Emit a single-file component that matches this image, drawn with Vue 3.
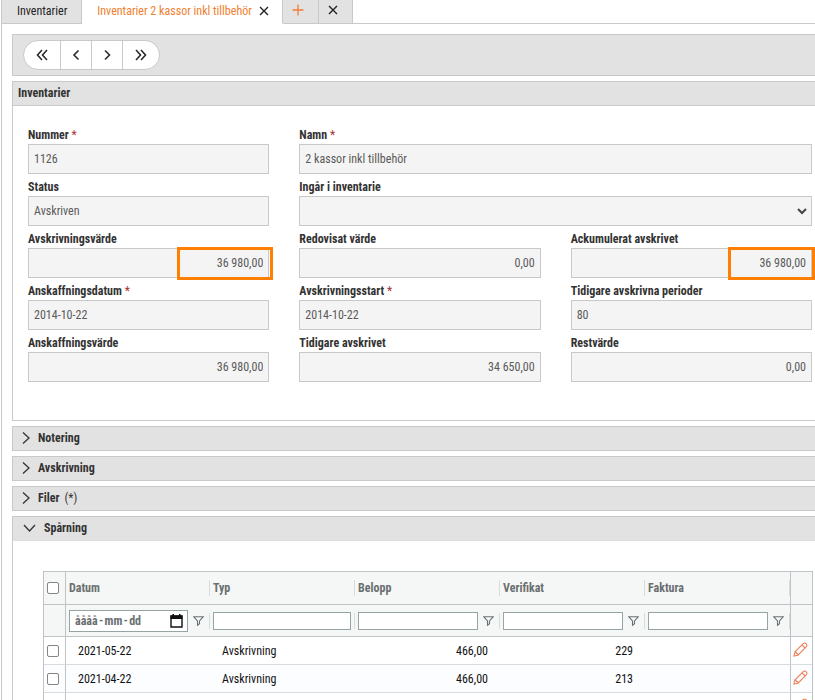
<script setup>
import { ref } from 'vue'

const fields = [
  { id: 'nummer', label: 'Nummer', required: true, value: '1126' },
  { id: 'namn', label: 'Namn', required: true, value: '2 kassor inkl tillbehör', wide: true },
  { id: 'status', label: 'Status', value: 'Avskriven' },
  { id: 'ingar', label: 'Ingår i inventarie', select: true, wide: true },
  { id: 'avskrivningsvarde', label: 'Avskrivningsvärde', value: '36 980,00', number: true, mark: 'mark' },
  { id: 'redovisat', label: 'Redovisat värde', value: '0,00', number: true },
  { id: 'ackumulerat', label: 'Ackumulerat avskrivet', value: '36 980,00', number: true, mark: 'mark mark-edge' },
  { id: 'anskaffningsdatum', label: 'Anskaffningsdatum', required: true, value: '2014-10-22' },
  { id: 'avskrivningsstart', label: 'Avskrivningsstart', required: true, value: '2014-10-22' },
  { id: 'perioder', label: 'Tidigare avskrivna perioder', value: '80' },
  { id: 'anskaffningsvarde', label: 'Anskaffningsvärde', value: '36 980,00', number: true },
  { id: 'tidigare', label: 'Tidigare avskrivet', value: '34 650,00', number: true },
  { id: 'restvarde', label: 'Restvärde', value: '0,00', number: true }
]

const closedPanels = [
  { title: 'Notering' },
  { title: 'Avskrivning' },
  { title: 'Filer', note: '(*)' }
]

const columns = [
  { name: 'Datum', date: true, funnel: true },
  { name: 'Typ' },
  { name: 'Belopp', funnel: true },
  { name: 'Verifikat', funnel: true },
  { name: 'Faktura', funnel: true }
]

const rows = ref([
  { id: 1, date: '2021-05-22', type: 'Avskrivning', amount: '466,00', voucher: '229' },
  { id: 2, date: '2021-04-22', type: 'Avskrivning', amount: '466,00', voucher: '213' },
  { id: 3, date: '', type: '', amount: '', voucher: '' }
])

const pager = [
  { label: 'Första', d: 'M7 2 2.5 7 7 12M12 2 7.5 7 12 12' },
  { label: 'Föregående', d: 'M9.5 2.5 5 7 9.5 11.5' },
  { label: 'Nästa', d: 'M5 2.5 9.5 7 5 11.5' },
  { label: 'Sista', d: 'M2 2 6.5 7 2 12M7 2 11.5 7 7 12' }
]
</script>

<template>
  <div class="page">
    <nav class="tabs">
      <button class="tab first">Inventarier</button>
      <div class="tab active">
        <button class="tab-title">Inventarier 2 kassor inkl tillbehör</button>
        <button class="plain" aria-label="Stäng flik">
          <svg width="10" height="10" viewBox="0 0 10 10"><path d="M1 1 9 9M9 1 1 9" stroke="#222" stroke-width="1.4" /></svg>
        </button>
      </div>
      <button class="tab small add" aria-label="Ny flik">
        <svg width="12" height="12" viewBox="0 0 12 12"><path d="M6 0.5V11.5M0.5 6H11.5" stroke="#f47c3c" stroke-width="1.3" /></svg>
      </button>
      <button class="tab small" aria-label="Stäng alla">
        <svg width="10" height="10" viewBox="0 0 10 10"><path d="M1 1 9 9M9 1 1 9" stroke="#222" stroke-width="1.4" /></svg>
      </button>
      <div class="tab-rest"></div>
    </nav>

    <main>
      <div class="toolbar">
        <div class="pager">
          <button v-for="p in pager" :key="p.label" :aria-label="p.label">
            <svg width="14" height="14" viewBox="0 0 14 14"><path :d="p.d" fill="none" stroke="#2b2b2b" stroke-width="1.6" /></svg>
          </button>
        </div>
      </div>

      <section class="panel">
        <h2 class="head">Inventarier</h2>
        <form class="fields" @submit.prevent>
          <div v-for="f in fields" :key="f.id" class="field" :class="{ wide: f.wide }">
            <label :for="f.id">{{ f.label }} <span v-if="f.required" class="req">*</span></label>
            <div class="box">
              <template v-if="f.select">
                <select :id="f.id"><option></option></select>
                <svg class="caret" width="10" height="7" viewBox="0 0 10 7"><path d="M1 1 5 5 9 1" fill="none" stroke="#444" stroke-width="2" /></svg>
              </template>
              <input v-else :id="f.id" type="text" :value="f.value" :class="{ number: f.number }" readonly />
              <span v-if="f.mark" :class="f.mark"></span>
            </div>
          </div>
        </form>
      </section>

      <button v-for="p in closedPanels" :key="p.title" class="head fold">
        <svg width="8" height="14" viewBox="0 0 8 14"><path d="M1 0.5 7 6 1 11.5" fill="none" stroke="#333" stroke-width="1.3" /></svg>
        <span>{{ p.title }}</span>
        <span v-if="p.note" class="note">{{ p.note }}</span>
      </button>

      <section class="panel">
        <button class="head fold open">
          <svg width="13" height="10" viewBox="0 0 13 10"><path d="M1 1 6.5 7 12 1" fill="none" stroke="#333" stroke-width="1.3" /></svg>
          <span>Spårning</span>
        </button>
        <div class="grid-wrap">
          <table>
            <colgroup>
              <col class="c-check" />
              <col v-for="c in columns" :key="c.name" :class="{ 'c-date': c.date }" />
              <col class="c-edit" />
            </colgroup>
            <thead>
              <tr class="titles">
                <th class="check"><input type="checkbox" aria-label="Markera alla" /></th>
                <th v-for="c in columns" :key="c.name"><div class="cell">{{ c.name }}</div></th>
                <th class="edit"></th>
              </tr>
              <tr class="filters">
                <td class="check"></td>
                <td v-for="c in columns" :key="c.name">
                  <div class="cell">
                    <div v-if="c.date" class="date">
                      <input type="text" placeholder="åååå&#8202;-&#8202;mm&#8202;-&#8202;dd" :aria-label="c.name" />
                      <svg width="13" height="14" viewBox="0 0 13 14"><path d="M1 2H12V13H1Z" fill="none" stroke="#111" stroke-width="1.4" /><path d="M0.5 1.5H12.5V5H0.5ZM2.5 0H4V2H2.5ZM9 0H10.5V2H9Z" fill="#111" /></svg>
                    </div>
                    <input v-else class="filter" type="text" :aria-label="c.name" />
                    <button v-if="c.funnel" class="funnel" aria-label="Filter">
                      <svg width="11" height="10" viewBox="0 0 11 10"><path d="M0.7 0.7H10.3L6.5 5V7.8L4.5 9.3V5Z" fill="none" stroke="#6b7276" stroke-width="1.1" /></svg>
                    </button>
                  </div>
                </td>
                <td class="edit"></td>
              </tr>
            </thead>
            <tbody>
              <tr v-for="r in rows" :key="r.id">
                <td class="check"><input type="checkbox" aria-label="Markera rad" /></td>
                <td>{{ r.date }}</td>
                <td>{{ r.type }}</td>
                <td class="num">{{ r.amount }}</td>
                <td class="num">{{ r.voucher }}</td>
                <td></td>
                <td class="edit">
                  <button class="plain" aria-label="Redigera">
                    <svg width="15" height="15" viewBox="0 0 15 15" fill="none" stroke="#f08058" stroke-width="1.1">
                      <path d="M1 14 1.8 10 10.2 1.6Q11.5 0.4 13 1.7 14.6 3.3 13.4 4.6L5 13.2ZM9 2.8 12.2 6M1.8 10Q3.4 9.8 3.4 11.4 5.2 11.4 5 13.2" />
                    </svg>
                  </button>
                </td>
              </tr>
            </tbody>
          </table>
        </div>
      </section>
    </main>
  </div>
</template>

<style>
body {
  background: #fff;
}
</style>

<style scoped>
.page,
.page * {
  box-sizing: border-box;
}
.page {
  height: 100vh;
  overflow: hidden;
  padding-left: 1px;
  font-family: "Roboto Condensed", "Liberation Sans Narrow", "Liberation Sans", sans-serif;
  font-size: 12px;
  color: #222;
}
button,
input,
select {
  font: inherit;
  color: inherit;
  margin: 0;
}
button {
  padding: 0;
  border: 0;
  background: none;
}
svg {
  display: block;
  flex: none;
}
.tabs {
  display: flex;
  height: 24px;
  border-left: 1px solid #c9c9c9;
}
.tab {
  display: flex;
  align-items: center;
  background: #e2e2e2;
  border-right: 1px solid #c9c9c9;
  border-bottom: 1px solid #c9c9c9;
}
.first {
  padding: 0 14px 2px 15px;
}
.tab.active {
  gap: 7px;
  padding: 0 13px 2px 15px;
  background: #fff;
  border-bottom-color: #fff;
}
.tab-title {
  color: #f08030;
}
.small {
  justify-content: center;
  width: 34px;
  padding: 0 4px 4px 0;
}
.add {
  width: 36px;
}
.tab-rest {
  flex: 1;
  border-bottom: 1px solid #c9c9c9;
}
main {
  display: flex;
  flex-direction: column;
  gap: 5px;
  min-height: 100%;
  padding: 10px 0 0 10px;
  border-left: 1px solid #c9c9c9;
}
.toolbar {
  padding: 5px 10px;
  background: #e2e2e2;
  border: 1px solid #c9c9c9;
  border-right: 0;
}
.pager {
  display: inline-flex;
  vertical-align: top;
  height: 30px;
  border: 1px solid #c9c9c9;
  border-radius: 15px;
  background: #fff;
  overflow: hidden;
}
.pager button {
  display: flex;
  align-items: center;
  justify-content: center;
  width: 31px;
  border-right: 1px solid #c9c9c9;
}
.pager button:first-child {
  width: 37px;
}
.pager button:last-child {
  width: 36px;
  border-right: 0;
}
.panel {
  border: 1px solid #c9c9c9;
  border-width: 0 0 1px 1px;
}
.head {
  height: 25px;
  margin: 0;
  padding: 0 5px;
  font-size: 12px;
  line-height: 23px;
  font-weight: bold;
  color: #333;
  background: #e2e2e2;
  border: 1px solid #c9c9c9;
  border-width: 1px 0;
}
.fold {
  display: flex;
  align-items: center;
  gap: 8px;
  width: 100%;
  padding: 0 9px;
  border-left-width: 1px;
}
.open {
  border-left-width: 0;
  padding-left: 10px;
  border-bottom-color: #ddd;
}
.note {
  font-weight: normal;
  margin-left: -3px;
}
.fields {
  display: grid;
  grid-template-columns: repeat(3, 1fr);
  column-gap: 30px;
  padding: 16px 3px 38px 15px;
}
.wide {
  grid-column: span 2;
}
.field label {
  display: block;
  height: 22px;
  line-height: 26px;
  font-weight: bold;
  color: #333;
}
.req {
  font-weight: normal;
  color: #a33;
}
.box {
  position: relative;
}
.box input,
.box select {
  display: block;
  width: 100%;
  height: 30px;
  padding: 0 5px;
  border: 1px solid #c9c9c9;
  border-radius: 0;
  background: #f4f4f4;
  color: #5a5a5a;
  appearance: none;
}
.box .number {
  text-align: right;
}
.caret {
  position: absolute;
  right: 5px;
  top: 12px;
  pointer-events: none;
}
.mark {
  position: absolute;
  top: -1px;
  right: -4px;
  width: 96px;
  height: 33px;
  border: 3px solid #ff8000;
  pointer-events: none;
}
.mark-edge {
  right: -3px;
  width: 87px;
}
.grid-wrap {
  padding: 30px 2px 20px 30px;
}
table {
  width: 100%;
  table-layout: fixed;
  border-collapse: separate;
  border-spacing: 0;
  border: 1px solid #bdc3c7;
}
.c-check,
.c-edit {
  width: 22px;
}
.c-date {
  width: 144px;
}
th,
td {
  padding: 0 12px;
  text-align: left;
  height: 28px;
  border-bottom: 1px solid #d9dcde;
  color: #111;
}
thead th,
thead td {
  padding: 0;
  background: #f5f7f7;
  border-bottom-color: #bdc3c7;
}
.titles th {
  height: 33px;
  color: #6b6f70;
}
.filters td {
  height: 32px;
}
.cell {
  display: flex;
  align-items: center;
  height: 16px;
  padding: 0 3px;
  border-right: 1px solid #d9dcde;
}
.check {
  padding: 0;
  border-right: 1px solid #bdc3c7;
}
.edit {
  padding: 0 0 0 2px;
  border-left: 1px solid #bdc3c7;
}
.num {
  text-align: right;
}
tbody tr:nth-child(even) td {
  background: #fcfdfe;
}
input[type='checkbox'] {
  display: block;
  appearance: none;
  width: 12px;
  height: 12px;
  margin: 0 auto 0 3px;
  border: 1px solid #858585;
  border-radius: 2px;
  background: #fff;
}
.filter {
  flex: 1;
  min-width: 0;
  height: 18px;
  padding: 0 4px;
  border: 1px solid #95a5a6;
  background: #fff;
}
.date {
  display: flex;
  align-items: center;
  flex: 1;
  min-width: 0;
  height: 22px;
  padding: 0 4px 0 5px;
  border: 1px solid #95a5a6;
  background: #fff;
}
.date input {
  flex: 1;
  min-width: 0;
  padding: 0;
  border: 0;
  outline: 0;
  background: none;
}
.date input::placeholder {
  color: #6b6f70;
  font-weight: bold;
  opacity: 1;
}
.funnel {
  padding: 0 2px 0 5px;
}
</style>
